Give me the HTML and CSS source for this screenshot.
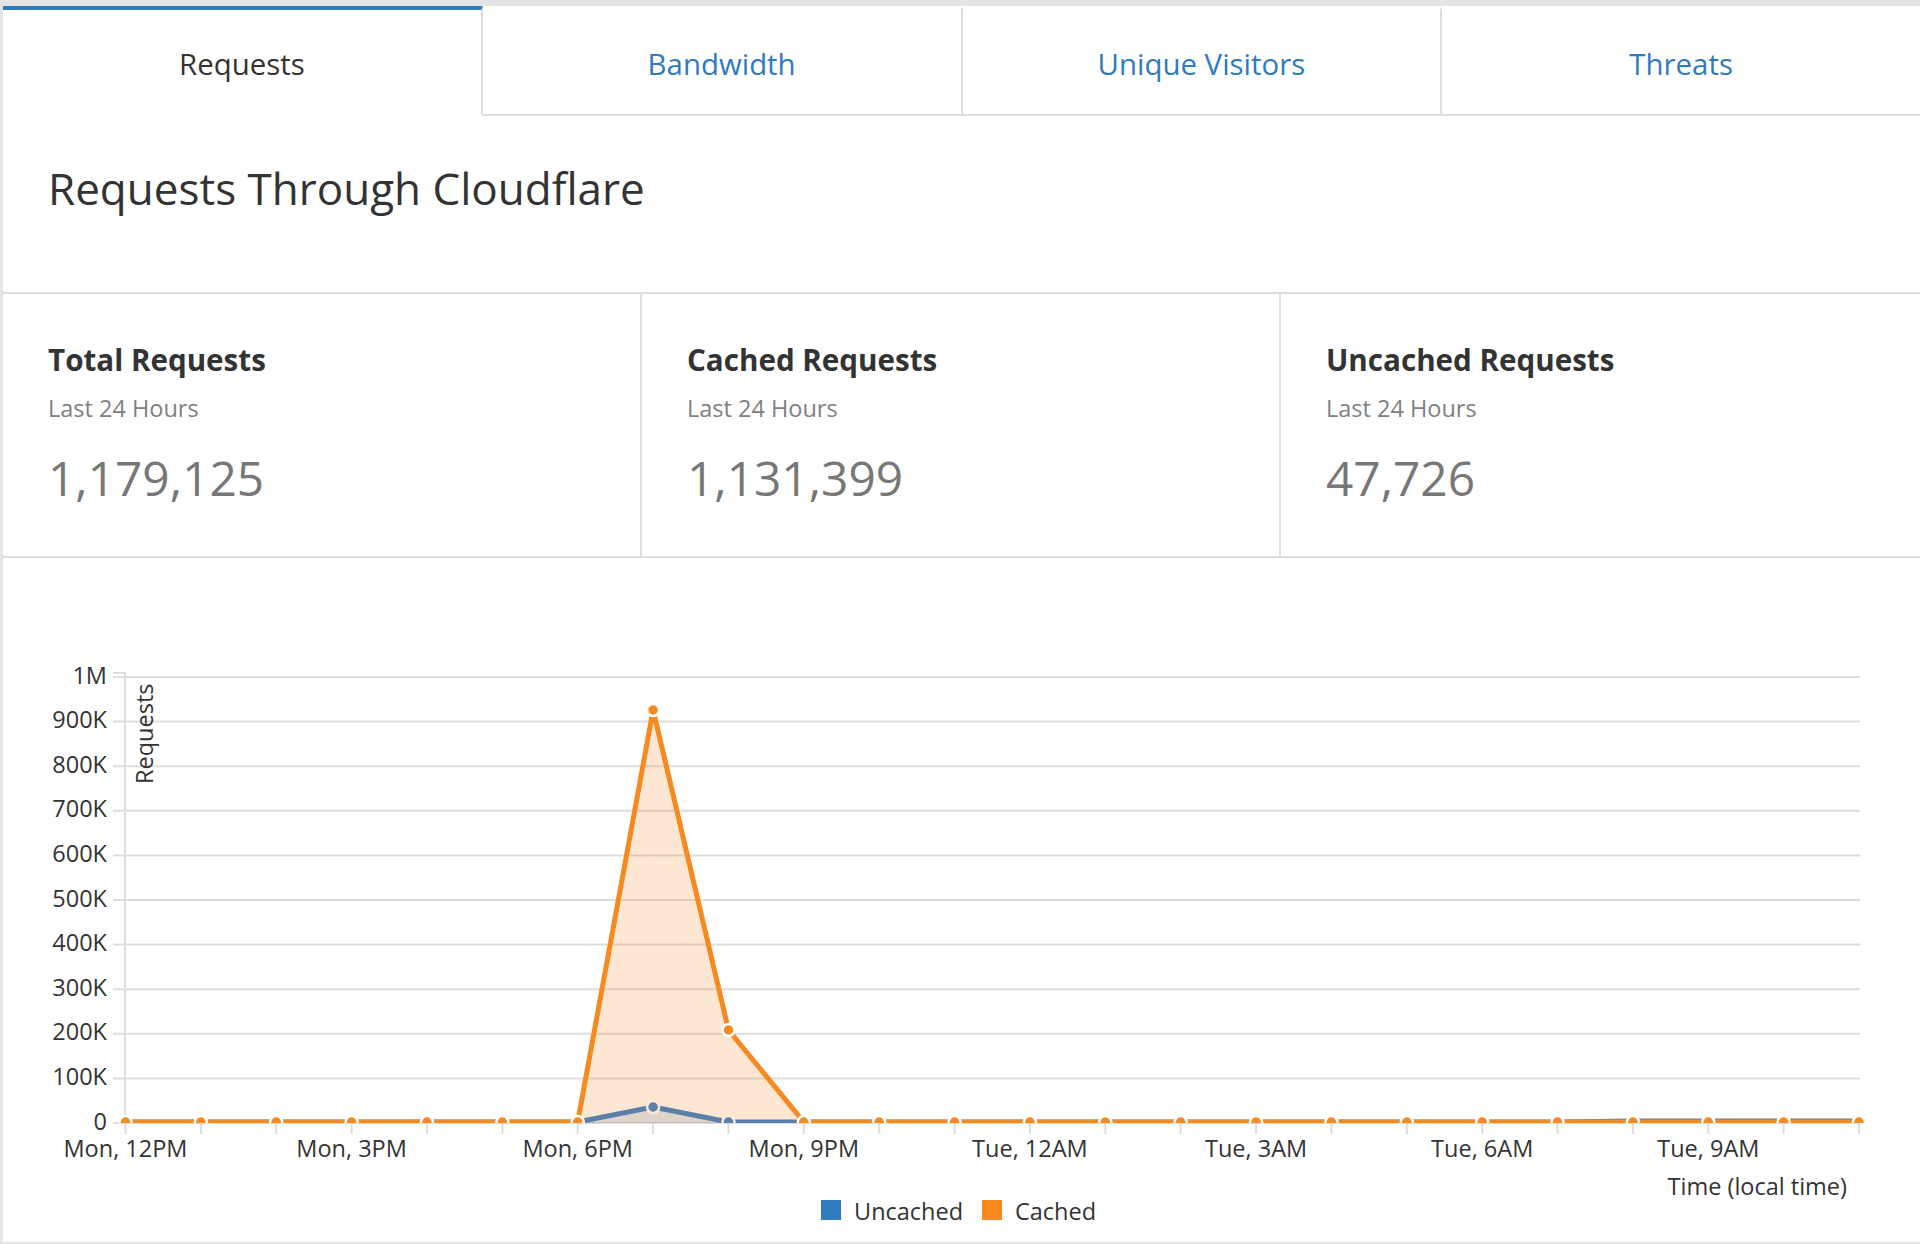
FILE: index.html
```html
<!DOCTYPE html>
<html lang="en">
<head>
<meta charset="utf-8">
<title>Requests Through Cloudflare</title>
<link rel="stylesheet" href="styles.css">
</head>
<body>
<div class="panel">
  <nav class="tabs">
    <div class="tab active">Requests</div>
    <div class="tab">Bandwidth</div>
    <div class="tab">Unique Visitors</div>
    <div class="tab">Threats</div>
  </nav>
  <header class="heading">
    <h1>Requests Through Cloudflare</h1>
  </header>
  <section class="stats">
    <div class="stat">
      <h3>Total Requests</h3>
      <p class="period">Last 24 Hours</p>
      <p class="value">1,179,125</p>
    </div>
    <div class="stat">
      <h3>Cached Requests</h3>
      <p class="period">Last 24 Hours</p>
      <p class="value">1,131,399</p>
    </div>
    <div class="stat">
      <h3>Uncached Requests</h3>
      <p class="period">Last 24 Hours</p>
      <p class="value">47,726</p>
    </div>
  </section>
  <section class="chart">
    <svg class="plot" width="1917" height="684" viewBox="3 558 1917 684" xmlns="http://www.w3.org/2000/svg">
      <defs>
        <clipPath id="plotclip"><rect x="0" y="600" width="1920" height="523"/></clipPath>
      </defs>
      <g class="grid">
        <line x1="113" y1="677" x2="1860" y2="677"/>
        <line x1="113" y1="721.6" x2="1860" y2="721.6"/>
        <line x1="113" y1="766.2" x2="1860" y2="766.2"/>
        <line x1="113" y1="810.8" x2="1860" y2="810.8"/>
        <line x1="113" y1="855.4" x2="1860" y2="855.4"/>
        <line x1="113" y1="900" x2="1860" y2="900"/>
        <line x1="113" y1="944.6" x2="1860" y2="944.6"/>
        <line x1="113" y1="989.2" x2="1860" y2="989.2"/>
        <line x1="113" y1="1033.8" x2="1860" y2="1033.8"/>
        <line x1="113" y1="1078.4" x2="1860" y2="1078.4"/>
        <line x1="113" y1="1123" x2="1860" y2="1123"/>
        <path class="domain" d="M113,673H125V1123"/>
      </g>
      <g class="ticks">
        <line x1="125.5" y1="1123" x2="125.5" y2="1134"/>
        <line x1="200.9" y1="1123" x2="200.9" y2="1134"/>
        <line x1="276.2" y1="1123" x2="276.2" y2="1134"/>
        <line x1="351.6" y1="1123" x2="351.6" y2="1134"/>
        <line x1="427" y1="1123" x2="427" y2="1134"/>
        <line x1="502.4" y1="1123" x2="502.4" y2="1134"/>
        <line x1="577.7" y1="1123" x2="577.7" y2="1134"/>
        <line x1="653.1" y1="1123" x2="653.1" y2="1134"/>
        <line x1="728.5" y1="1123" x2="728.5" y2="1134"/>
        <line x1="803.8" y1="1123" x2="803.8" y2="1134"/>
        <line x1="879.2" y1="1123" x2="879.2" y2="1134"/>
        <line x1="954.6" y1="1123" x2="954.6" y2="1134"/>
        <line x1="1029.9" y1="1123" x2="1029.9" y2="1134"/>
        <line x1="1105.3" y1="1123" x2="1105.3" y2="1134"/>
        <line x1="1180.7" y1="1123" x2="1180.7" y2="1134"/>
        <line x1="1256.1" y1="1123" x2="1256.1" y2="1134"/>
        <line x1="1331.4" y1="1123" x2="1331.4" y2="1134"/>
        <line x1="1406.8" y1="1123" x2="1406.8" y2="1134"/>
        <line x1="1482.2" y1="1123" x2="1482.2" y2="1134"/>
        <line x1="1557.5" y1="1123" x2="1557.5" y2="1134"/>
        <line x1="1632.9" y1="1123" x2="1632.9" y2="1134"/>
        <line x1="1708.3" y1="1123" x2="1708.3" y2="1134"/>
        <line x1="1783.6" y1="1123" x2="1783.6" y2="1134"/>
        <line x1="1859" y1="1123" x2="1859" y2="1134"/>
      </g>
      <g class="ylabels">
        <text x="107" y="683.5">1M</text>
        <text x="107" y="728.1">900K</text>
        <text x="107" y="772.7">800K</text>
        <text x="107" y="817.3">700K</text>
        <text x="107" y="861.9">600K</text>
        <text x="107" y="906.5">500K</text>
        <text x="107" y="951.1">400K</text>
        <text x="107" y="995.7">300K</text>
        <text x="107" y="1040.3">200K</text>
        <text x="107" y="1084.9">100K</text>
        <text x="107" y="1129.5">0</text>
      </g>
      <text class="axis-title" transform="translate(153 784) rotate(-90)">Requests</text>
      <g class="xlabels">
        <text x="125.5" y="1157">Mon, 12PM</text>
        <text x="351.6" y="1157">Mon, 3PM</text>
        <text x="577.7" y="1157">Mon, 6PM</text>
        <text x="803.8" y="1157">Mon, 9PM</text>
        <text x="1029.9" y="1157">Tue, 12AM</text>
        <text x="1256.1" y="1157">Tue, 3AM</text>
        <text x="1482.2" y="1157">Tue, 6AM</text>
        <text x="1708.3" y="1157">Tue, 9AM</text>
      </g>
      <text class="x-title" x="1847" y="1195">Time (local time)</text>
      <g clip-path="url(#plotclip)">
        <polygon class="area-cached" points="125.5,1123 125.5,1122 200.9,1122 276.2,1122 351.6,1122 427,1122 502.4,1122 577.7,1122 653.1,710 728.5,1030 803.8,1122 879.2,1122 954.6,1122 1029.9,1122 1105.3,1122 1180.7,1122 1256.1,1122 1331.4,1122 1406.8,1122 1482.2,1122 1557.5,1122 1632.9,1122 1708.3,1122 1783.6,1122 1859,1122 1859,1123"/>
        <polygon class="area-uncached" points="125.5,1123 125.5,1122 200.9,1122 276.2,1122 351.6,1122 427,1122 502.4,1122 577.7,1122 653.1,1107 728.5,1122 803.8,1122 879.2,1122 954.6,1122 1029.9,1122 1105.3,1122 1180.7,1122 1256.1,1122 1331.4,1122 1406.8,1122 1482.2,1122 1557.5,1122 1632.9,1121 1708.3,1121 1783.6,1121 1859,1121 1859,1123"/>
        <polyline class="line-uncached" points="125.5,1122 200.9,1122 276.2,1122 351.6,1122 427,1122 502.4,1122 577.7,1122 653.1,1107 728.5,1122 803.8,1122 879.2,1122 954.6,1122 1029.9,1122 1105.3,1122 1180.7,1122 1256.1,1122 1331.4,1122 1406.8,1122 1482.2,1122 1557.5,1122 1632.9,1121 1708.3,1121 1783.6,1121 1859,1121"/>
        <g class="dots-uncached">
          <circle cx="653.1" cy="1107" r="6"/>
          <circle cx="728.5" cy="1122" r="6"/>
        </g>
        <polyline class="line-cached" points="125.5,1122 200.9,1122 276.2,1122 351.6,1122 427,1122 502.4,1122 577.7,1122 653.1,710 728.5,1030 803.8,1122 879.2,1122 954.6,1122 1029.9,1122 1105.3,1122 1180.7,1122 1256.1,1122 1331.4,1122 1406.8,1122 1482.2,1122 1557.5,1122 1632.9,1122 1708.3,1122 1783.6,1122 1859,1122"/>
        <g class="dots-cached">
          <circle cx="125.5" cy="1122" r="6"/>
          <circle cx="200.9" cy="1122" r="6"/>
          <circle cx="276.2" cy="1122" r="6"/>
          <circle cx="351.6" cy="1122" r="6"/>
          <circle cx="427" cy="1122" r="6"/>
          <circle cx="502.4" cy="1122" r="6"/>
          <circle cx="577.7" cy="1122" r="6"/>
          <circle cx="653.1" cy="710" r="6"/>
          <circle cx="728.5" cy="1030" r="6"/>
          <circle cx="803.8" cy="1122" r="6"/>
          <circle cx="879.2" cy="1122" r="6"/>
          <circle cx="954.6" cy="1122" r="6"/>
          <circle cx="1029.9" cy="1122" r="6"/>
          <circle cx="1105.3" cy="1122" r="6"/>
          <circle cx="1180.7" cy="1122" r="6"/>
          <circle cx="1256.1" cy="1122" r="6"/>
          <circle cx="1331.4" cy="1122" r="6"/>
          <circle cx="1406.8" cy="1122" r="6"/>
          <circle cx="1482.2" cy="1122" r="6"/>
          <circle cx="1557.5" cy="1122" r="6"/>
          <circle cx="1632.9" cy="1122" r="6"/>
          <circle cx="1708.3" cy="1122" r="6"/>
          <circle cx="1783.6" cy="1122" r="6"/>
          <circle cx="1859" cy="1122" r="6"/>
        </g>
      </g>
      <g class="legend">
        <rect class="swatch-uncached" x="821" y="1200" width="20" height="20"/>
        <text x="854" y="1220">Uncached</text>
        <rect class="swatch-cached" x="982" y="1200" width="20" height="20"/>
        <text x="1015" y="1220">Cached</text>
      </g>
    </svg>
  </section>
</div>
</body>
</html>
```

FILE: styles.css
```css
html, body {
  margin: 0;
  padding: 0;
}

body {
  background: #e4e4e4;
  font-family: "Open Sans", "Liberation Sans", sans-serif;
  color: #333;
  height: 1244px;
  overflow: hidden;
}

.panel {
  margin: 6px 0 0 3px;
  width: 1917px;
  height: 1236px;
  background: #fff;
  display: flex;
  flex-direction: column;
}

/* Tabs */
.tabs {
  display: flex;
}

.tab {
  flex: 1;
  text-align: center;
  font-size: 29.4px;
  line-height: 40px;
  color: #2f7bbf;
  padding: 34px 0 30px;
  border-top: 4px solid #fff;
  border-bottom: 2px solid #ddd;
  border-right: 2px solid #ddd;
}

.tab:last-child {
  border-right: none;
}

.tab.active {
  color: #333;
  border-top-color: #2f7bbf;
  border-bottom-color: #fff;
}

/* Heading */
.heading {
  padding: 42px 45px 74px;
  border-bottom: 2px solid #ddd;
}

.heading h1 {
  margin: 0;
  font-size: 44px;
  line-height: 60px;
  font-weight: 400;
  color: #333;
}

/* Stats */
.stats {
  display: grid;
  grid-template-columns: repeat(3, 1fr);
  border-bottom: 2px solid #ddd;
}

.stat {
  padding: 46px 45px 48px;
  border-right: 2px solid #ddd;
}

.stat:last-child {
  border-right: none;
}

.stat h3 {
  margin: 0;
  font-size: 29.6px;
  line-height: 40px;
  font-weight: 700;
  color: #333;
}

.stat .period {
  margin: 12px 0 0;
  font-size: 23.5px;
  line-height: 32px;
  color: #808080;
}

.stat .value {
  margin: 24px 0 0;
  font-size: 47.8px;
  line-height: 60px;
  color: #777;
}

/* Chart */
.chart {
  flex: 1;
}

.plot {
  display: block;
}

.plot text {
  font-family: "Open Sans", "Liberation Sans", sans-serif;
  font-size: 23.5px;
  fill: #333;
}

.grid line,
.grid .domain,
.ticks line {
  stroke: #ddd;
  stroke-width: 2;
  fill: none;
}

.ylabels text {
  text-anchor: end;
}

.xlabels text {
  text-anchor: middle;
}

.x-title {
  text-anchor: end;
}

.area-cached {
  fill: #f6891f;
  fill-opacity: 0.2;
}

.area-uncached {
  fill: #5a7fa9;
  fill-opacity: 0.18;
}

.line-cached {
  fill: none;
  stroke: #f6891f;
  stroke-width: 5;
  stroke-linejoin: round;
}

.line-uncached {
  fill: none;
  stroke: #5a7fa9;
  stroke-width: 5;
  stroke-linejoin: round;
}

.dots-cached circle {
  fill: #f6891f;
  stroke: #fff;
  stroke-width: 2.5;
}

.dots-uncached circle {
  fill: #5a7fa9;
  stroke: #fbe9da;
  stroke-width: 2.5;
}

.swatch-uncached {
  fill: #2f7bbf;
}

.swatch-cached {
  fill: #f6891f;
}
```
